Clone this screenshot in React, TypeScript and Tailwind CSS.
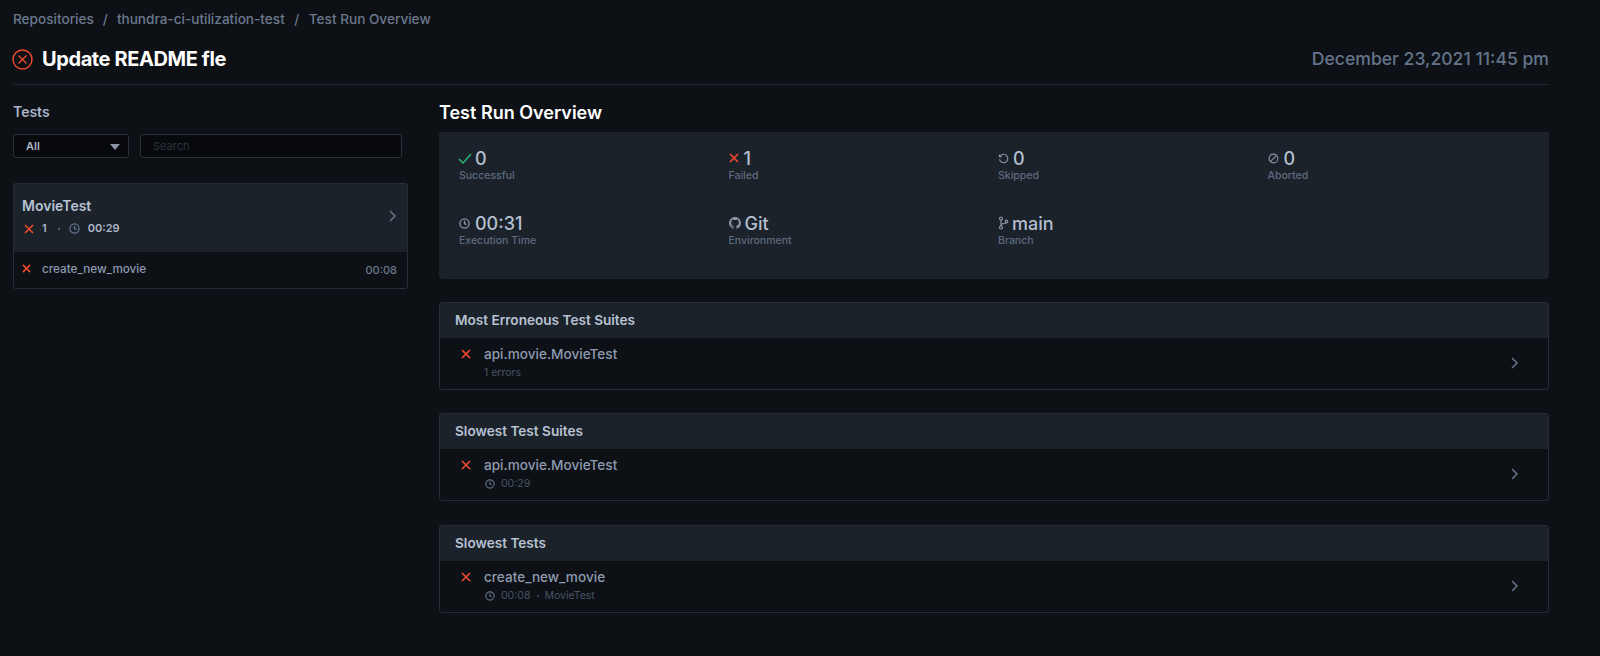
import React from "react";

const X = ({ size = 12, className = "" }: { size?: number; className?: string }) => (
  <svg width={size} height={size} viewBox="0 0 12 12" fill="none" stroke="#f0492c" strokeWidth="2" className={"shrink-0 " + className}>
    <path d="M1.2 1.2l9.6 9.6M10.8 1.2l-9.6 9.6" />
  </svg>
);

const Clock = ({ size = 11, color = "#64748b" }: { size?: number; color?: string }) => (
  <svg width={size} height={size} viewBox="0 0 12 12" fill="none" stroke={color} strokeWidth="1.4" className="shrink-0">
    <circle cx="6" cy="6" r="5" />
    <path d="M6 3v3.2l2 1" />
  </svg>
);

const Chevron = ({ className = "" }: { className?: string }) => (
  <svg width="9" height="14" viewBox="0 0 9 14" fill="none" stroke="#64748b" strokeWidth="1.5" className={"shrink-0 " + className}>
    <path d="M2 2l5 5-5 5" />
  </svg>
);

const Stat = ({ icon, value, label, gap = "gap-[4px]" }: { icon: React.ReactNode; value: string; label: string; gap?: string }) => (
  <div className="flex flex-col">
    <div className={"flex items-center h-[20px] text-[18px] font-medium text-[#b4bfd0] " + gap}>
      {icon}
      <span>{value}</span>
    </div>
    <div className="text-[10.5px] leading-[14px] mt-[1px] font-medium text-[#5e6b7e]">{label}</div>
  </div>
);

const Section = ({ title, name, meta, className = "" }: { title: string; name: string; meta: React.ReactNode; className?: string }) => (
  <div className={"border border-[#262d38] rounded-[3px] overflow-hidden " + className}>
    <div className="h-[35px] bg-[#1b222a] flex items-center pl-[15px] text-[13.6px] font-semibold text-[#b8c2d3]">{title}</div>
    <div className="h-[51px] flex items-center pl-[21px] pr-[29px] pb-[2px]">
      <X size={10} className="mb-[17px] mr-[13px]" />
      <div className="flex-1 flex flex-col">
        <div className="text-[13.6px] leading-[18px] font-medium text-[#8e9bb0]">{name}</div>
        <div className="flex items-center text-[10.5px] leading-[14px] mt-[3px] text-[#465364]">{meta}</div>
      </div>
      <Chevron />
    </div>
  </div>
);

export default function App() {
  return (
    <div className="min-h-[656px] bg-[#0d1116] pl-[13px] pr-[51px] pt-[9px] font-['Inter',sans-serif]">
      <div className="flex items-center h-[20px] text-[13.6px] font-medium text-[#6b788c]">
        <span>Repositories</span>
        <span className="mx-[9px]">/</span>
        <span>thundra-ci-utilization-test</span>
        <span className="mx-[9.5px]">/</span>
        <span>Test Run Overview</span>
      </div>
      <div className="flex items-center justify-between h-[38px] mt-[11px]">
        <div className="flex items-center gap-[9px] ml-[-1px]">
          <svg width="21" height="21" viewBox="0 0 21 21" fill="none" stroke="#f0492c" strokeWidth="1.4">
            <circle cx="10.5" cy="10.5" r="9.5" />
            <path d="M6.5 6.5l8 8M14.5 6.5l-8 8" />
          </svg>
          <span className="text-[20px] font-bold text-white tracking-[-0.4px]">Update README fle</span>
        </div>
        <span className="text-[17.6px] font-medium text-[#64748b]">December 23,2021 11:45 pm</span>
      </div>
      <div className="h-px bg-[#232a34] mt-[6px]" />

      <div className="flex gap-[31px] mt-[15px]">
        <div className="w-[395px] shrink-0">
          <div className="h-[24px] flex items-center text-[14px] font-semibold text-[#aab5c7] mt-[-1px]">Tests</div>
          <div className="flex gap-[11px] mt-[11px] pr-[6px]">
            <div className="w-[116px] h-[24px] bg-[#07090c] border border-[#2a313c] rounded-[3px] flex items-center justify-between pl-[12px] pr-[8px] text-[11px] font-semibold text-[#aab5c7]">
              <span>All</span>
              <svg width="10" height="6" viewBox="0 0 10 6" className="mt-[2px]">
                <path d="M0 0h10L5 6z" fill="#8a94a6" />
              </svg>
            </div>
            <div className="flex-1 h-[24px] bg-[#07090c] border border-[#2a313c] rounded-[3px] flex items-center pl-[12px] text-[11px] text-[#2a3340]">Search</div>
          </div>
          <div className="mt-[25px] border border-[#262d38] rounded-[3px] overflow-hidden">
            <div className="h-[68px] bg-[#1b222a] flex items-center pl-[8px] pr-[10px] pb-[2px]">
              <div className="flex-1 flex flex-col">
                <div className="text-[14px] leading-[18px] font-semibold text-[#b8c2d3]">MovieTest</div>
                <div className="flex items-center mt-[5px] text-[11px] font-semibold text-[#aab5c7]">
                  <X size={10} className="ml-[2px]" />
                  <span className="ml-[8px]">1</span>
                  <span className="ml-[11px] w-[2px] h-[2px] rounded-full bg-[#64748b]" />
                  <span className="ml-[9px]"><Clock /></span>
                  <span className="ml-[8px]">00:29</span>
                </div>
              </div>
              <Chevron className="mb-[2px]" />
            </div>
            <div className="h-[36px] flex items-center pl-[8px] pr-[10px] text-[11.7px] font-medium text-[#8e9bb0]">
              <X size={9} className="mb-[4px]" />
              <span className="flex-1 ml-[11px]">create_new_movie</span>
              <span className="text-[11px] text-[#6b788c]">00:08</span>
            </div>
          </div>
        </div>

        <div className="flex-1 min-w-0">
          <div className="h-[24px] flex items-center text-[18px] font-semibold text-white">Test Run Overview</div>
          <div className="mt-[8px] h-[147px] bg-[#1b222a] rounded-[3px] pl-[20px] pr-[12px] pt-[16px] grid grid-cols-4 grid-rows-[65px_65px]">
            <Stat
              icon={
                <svg width="14" height="11" viewBox="0 0 14 11" fill="none" stroke="#2bb673" strokeWidth="1.5" className="ml-[-1px]">
                  <path d="M1 6l4 4 8-9" />
                </svg>
              }
              value="0"
              label="Successful"
              gap="gap-[3px]"
            />
            <Stat icon={<X size={10} />} value="1" label="Failed" gap="gap-[5px]" />
            <Stat
              icon={
                <svg width="11" height="11" viewBox="0 0 12 12" fill="none" stroke="#8a94a6" strokeWidth="1.2">
                  <path d="M2.2 3.5A4.6 4.6 0 1 1 1.6 7" />
                  <path d="M1.5 1.5v2.4h2.4" />
                </svg>
              }
              value="0"
              label="Skipped"
            />
            <Stat
              icon={
                <svg width="11" height="11" viewBox="0 0 12 12" fill="none" stroke="#8a94a6" strokeWidth="1.2">
                  <circle cx="6" cy="6" r="4.8" />
                  <path d="M2.8 9.2l6.4-6.4" />
                </svg>
              }
              value="0"
              label="Aborted"
              gap="gap-[5px]"
            />
            <Stat icon={<Clock size={11} color="#8a94a6" />} value="00:31" label="Execution Time" gap="gap-[5px]" />
            <Stat
              icon={
                <svg width="12" height="12" viewBox="0 0 16 16" fill="#8a94a6">
                  <path d="M8 0C3.58 0 0 3.58 0 8c0 3.54 2.29 6.53 5.47 7.59.4.07.55-.17.55-.38 0-.19-.01-.82-.01-1.49-2.01.37-2.53-.49-2.69-.94-.09-.23-.48-.94-.82-1.13-.28-.15-.68-.52-.01-.53.63-.01 1.08.58 1.23.82.72 1.21 1.87.87 2.33.66.07-.52.28-.87.51-1.07-1.78-.2-3.64-.89-3.64-3.95 0-.87.31-1.59.82-2.15-.08-.2-.36-1.02.08-2.12 0 0 .67-.21 2.2.82.64-.18 1.32-.27 2-.27s1.36.09 2 .27c1.53-1.04 2.2-.82 2.2-.82.44 1.1.16 1.92.08 2.12.51.56.82 1.27.82 2.15 0 3.07-1.87 3.75-3.65 3.95.29.25.54.73.54 1.48 0 1.07-.01 1.93-.01 2.2 0 .21.15.46.55.38A8.01 8.01 0 0 0 16 8c0-4.42-3.58-8-8-8z" />
                </svg>
              }
              value="Git"
              label="Environment"
            />
            <Stat
              icon={
                <svg width="11" height="14" viewBox="0 0 11 14" fill="none" stroke="#8a94a6" strokeWidth="1.2">
                  <circle cx="3" cy="2.5" r="1.5" />
                  <circle cx="3" cy="11.5" r="1.5" />
                  <circle cx="8.5" cy="5.5" r="1.3" />
                  <path d="M3 4v6M3 9c0-2 5.5-1 5.5-2.5" />
                </svg>
              }
              value="main"
              label="Branch"
              gap="gap-[3px]"
            />
          </div>

          <div className="mt-[23px] flex flex-col gap-[23px]">
            <Section title="Most Erroneous Test Suites" name="api.movie.MovieTest" meta={<span>1 errors</span>} />
            <Section
              title="Slowest Test Suites"
              name="api.movie.MovieTest"
              meta={
                <>
                  <span className="ml-[1px]"><Clock size={10} /></span>
                  <span className="ml-[6px]">00:29</span>
                </>
              }
            />
            <Section
              className="mt-[1px]"
              title="Slowest Tests"
              name="create_new_movie"
              meta={
                <>
                  <span className="ml-[1px]"><Clock size={10} /></span>
                  <span className="ml-[6px]">00:08</span>
                  <span className="ml-[7px] w-[2px] h-[2px] rounded-full bg-[#465364]" />
                  <span className="ml-[5px]">MovieTest</span>
                </>
              }
            />
          </div>
        </div>
      </div>
    </div>
  );
}
